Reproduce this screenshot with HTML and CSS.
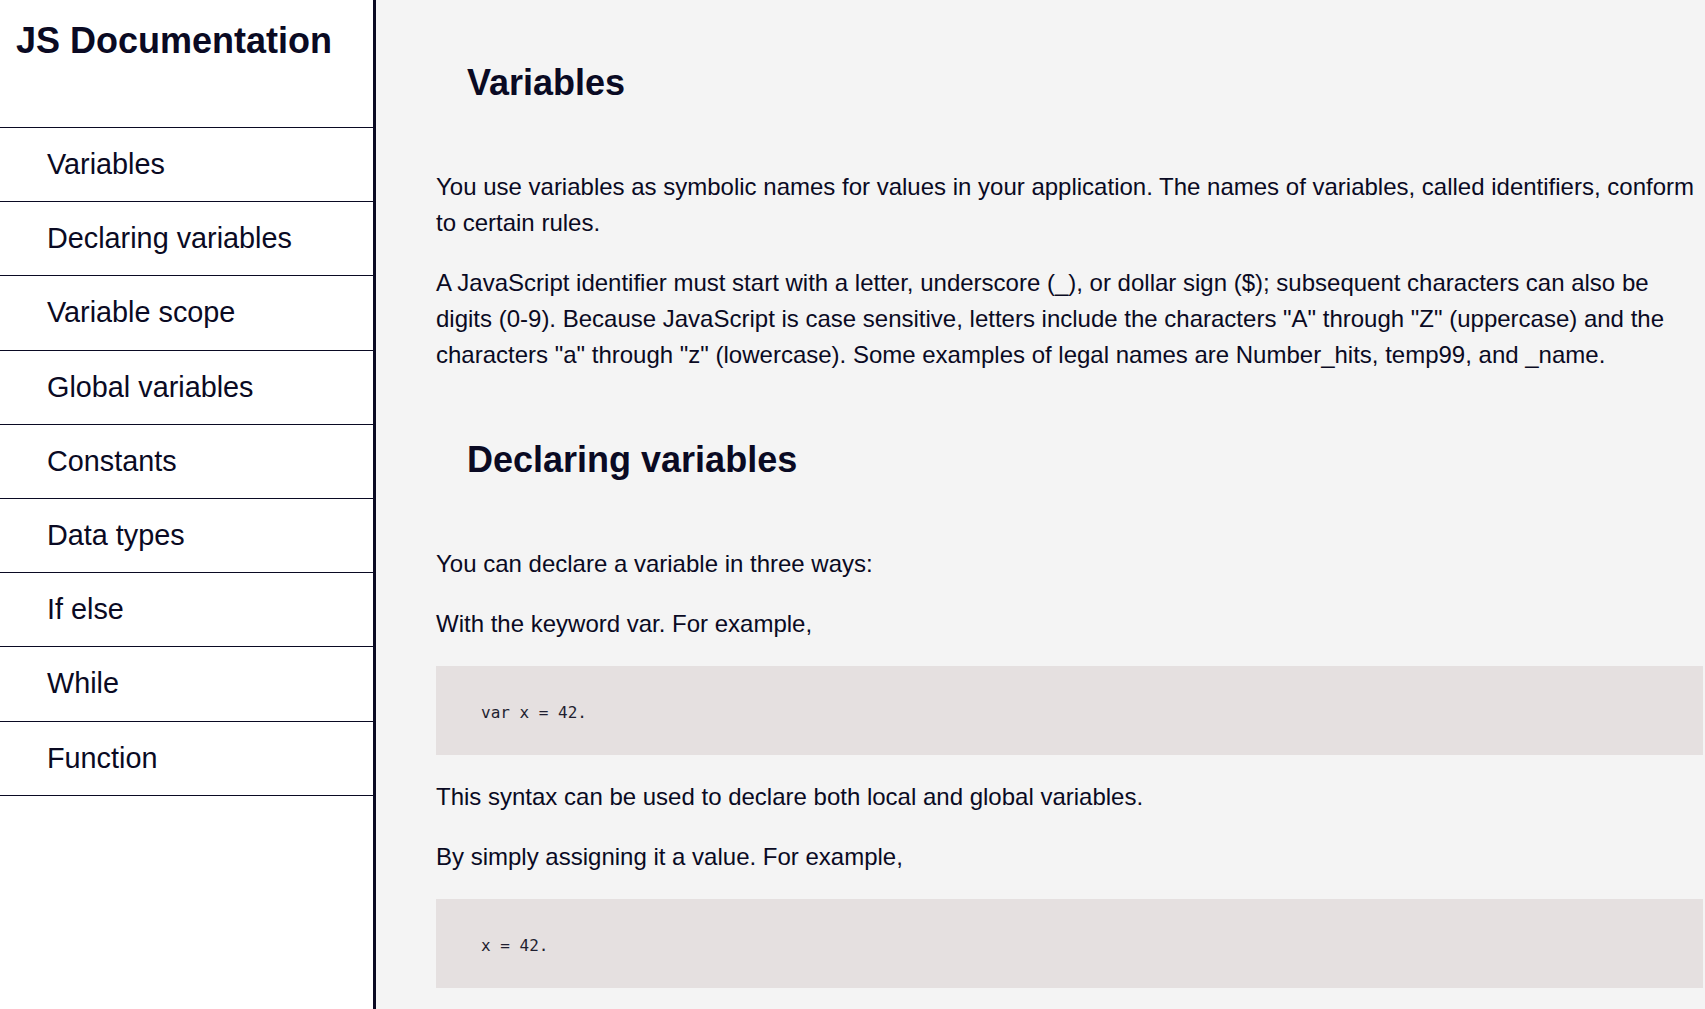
FILE: index.html
```html
<!DOCTYPE html>
<html lang="en">
<head>
<meta charset="utf-8">
<title>JS Documentation</title>
<link rel="stylesheet" href="styles.css">
</head>
<body>
<div class="page">
  <nav class="navbar" id="navbar">
    <header class="nav-header"><h1 class="nav-title">JS Documentation</h1></header>
    <ul class="nav-list">
      <li><a class="nav-link" href="#Variables">Variables</a></li>
      <li><a class="nav-link" href="#Declaring_variables">Declaring variables</a></li>
      <li><a class="nav-link" href="#Variable_scope">Variable scope</a></li>
      <li><a class="nav-link" href="#Global_variables">Global variables</a></li>
      <li><a class="nav-link" href="#Constants">Constants</a></li>
      <li><a class="nav-link" href="#Data_types">Data types</a></li>
      <li><a class="nav-link" href="#If_else">If else</a></li>
      <li><a class="nav-link" href="#While">While</a></li>
      <li><a class="nav-link" href="#Function">Function</a></li>
    </ul>
  </nav>
  <main class="main-doc" id="main-doc">
    <section class="main-section" id="Variables">
      <header class="section-header"><h2 class="section-title">Variables</h2></header>
      <p class="text">You use variables as symbolic names for values in your application. The names of variables, called identifiers, conform to certain rules.</p>
      <p class="text">A JavaScript identifier must start with a letter, underscore (_), or dollar sign ($); subsequent characters can also be digits (0-9). Because JavaScript is case sensitive, letters include the characters "A" through "Z" (uppercase) and the characters "a" through "z" (lowercase). Some examples of legal names are Number_hits, temp99, and _name.</p>
    </section>
    <section class="main-section" id="Declaring_variables">
      <header class="section-header"><h2 class="section-title">Declaring variables</h2></header>
      <p class="text">You can declare a variable in three ways:</p>
      <p class="text">With the keyword var. For example,</p>
      <pre class="code-block"><code>var x = 42.</code></pre>
      <p class="text">This syntax can be used to declare both local and global variables.</p>
      <p class="text">By simply assigning it a value. For example,</p>
      <pre class="code-block"><code>x = 42.</code></pre>
    </section>
  </main>
</div>
</body>
</html>
```
FILE: styles.css
```css
html, body {
  margin: 0;
  padding: 0;
}

body {
  font-family: "Liberation Sans", Arial, sans-serif;
  color: #0a0a23;
  background: #f4f4f4;
}

.page {
  display: flex;
  align-items: stretch;
  min-height: 100vh;
}

.navbar {
  flex: 0 0 373px;
  width: 373px;
  background: #ffffff;
  border-right: 3px solid #0a0a23;
}

.nav-header {
  box-sizing: border-box;
  height: 127px;
  padding: 20px 0 0 16px;
}

.nav-title {
  margin: 0;
  font-size: 36px;
  font-weight: bold;
  line-height: normal;
}

.nav-list {
  list-style: none;
  margin: 0;
  padding: 0;
  border-bottom: 1px solid #0a0a23;
}

.nav-list li {
  border-top: 1px solid #0a0a23;
}

.nav-link {
  display: block;
  padding: 20.1px 0 20.1px 47px;
  font-size: 28.8px;
  line-height: normal;
  color: #0a0a23;
  text-decoration: none;
}

.main-doc {
  flex: 1 1 auto;
  min-width: 0;
  padding: 20px 2px 0 60px;
}

.section-header {
  display: block;
}

.section-title {
  margin: 0;
  padding: 42px 0 42px 31px;
  font-size: 36px;
  font-weight: bold;
  line-height: 41px;
}

.text {
  margin: 24px 0;
  font-size: 24px;
  line-height: 36px;
}

.code-block {
  box-sizing: border-box;
  height: 89px;
  margin: 24px 0;
  padding: 37px 0 0 45px;
  background: #e5e0e0;
  font-family: "Liberation Mono", "DejaVu Sans Mono", monospace;
  font-size: 16px;
  line-height: 20px;
  color: #1f1f30;
  white-space: pre;
}
```
